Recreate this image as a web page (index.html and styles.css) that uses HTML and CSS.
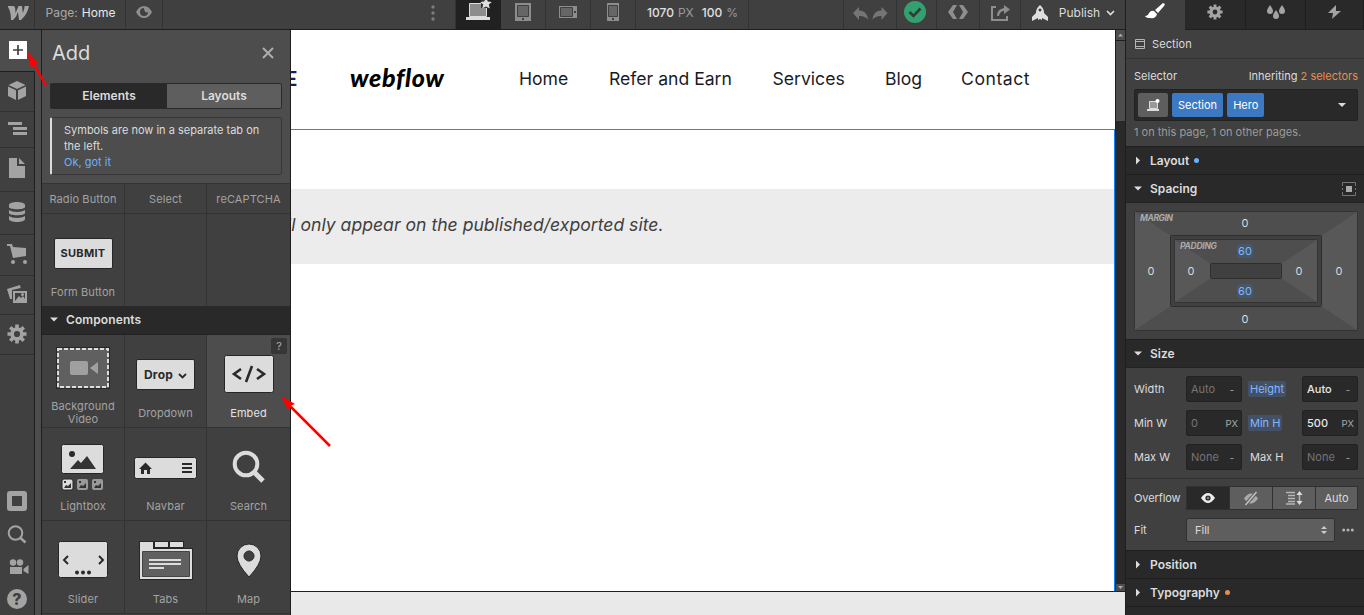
FILE: index.html
```html
<!DOCTYPE html>
<html lang="en">
<head>
<meta charset="utf-8">
<title>Webflow Designer</title>
<link rel="stylesheet" href="styles.css">
</head>
<body>
<div class="app">
  <div class="main">
    <header class="topbar">
      <div class="cell t-logo"><svg width="22" height="16" viewBox="0 0 22 16"><path fill="#a5a5a5" d="M0 1h5q2 0 2.100 2l.5 5L10.500 1H14l.8 7q2-5 1.700-7H21q-1.500 8-8 14H11l-1-8q-1.500 5-5 8H3Q3 7 0 2z"/></svg></div>
      <div class="cell t-page"><span class="dim">Page:</span><span class="home">Home</span></div>
      <div class="cell t-eye"><svg width="16" height="12" viewBox="0 0 16 12"><path fill="#8e8e8e" fill-rule="evenodd" d="M0 6Q3 0 8 0t8 6q-3 6-8 6T0 6zM8 2a4 4 0 1 0 4 4Q10 7 9 5.500T8 2z"/></svg></div>
      <div class="t-space"><svg width="4" height="16"><g fill="#7c7c7c"><circle cx="2" cy="2" r="1.700"/><circle cx="2" cy="8" r="1.700"/><circle cx="2" cy="14" r="1.700"/></g></svg></div>
      <div class="cell t-device on"><svg width="24" height="22" viewBox="0 0 24 22"><path fill="#8d8d8d" stroke="#ddd" d="M3.500 5.500h17v13h-17z"/><path fill="#333" d="M15 2h7v8h-7z"/><path fill="#ddd" d="M0 19h24v3H0zM20 0l1.800 3.500 4 .4-3 2.700 1 4L20 8.500l-3.800 2.100 1-4-3-2.700 4-.4z"/></svg></div>
      <div class="cell t-device"><svg width="16" height="18"><path fill="#8d8d8d" d="M0 0h16v18H0z"/><path fill="#666" stroke="#404040" d="M2.500 2.500h11v11h-11z"/><path fill="#404040" d="M7 15h2v2H7z"/></svg></div>
      <div class="cell t-device"><svg width="18" height="12"><path fill="#8d8d8d" d="M0 0h18v12H0z"/><path fill="#666" stroke="#404040" d="M1.500 1.500h12v9h-12z"/><path fill="#404040" d="M15 5h2v2h-2z"/></svg></div>
      <div class="cell t-device"><svg width="12" height="18"><path fill="#8d8d8d" d="M0 0h12v18H0z"/><path fill="#666" stroke="#404040" d="M1.500 2.500h9v11h-9z"/><path fill="#404040" d="M5 15h2v2H5z"/></svg></div>
      <div class="cell t-size"><b>1070</b><span>PX</span><b class="pct">100</b><span>%</span></div>
      <div class="t-fill"></div>
      <div class="cell t-undo"><svg width="35" height="13"><path fill="#757575" d="M0 6l6-6v3.500q8 0 9 9-3.500-4-9-3.500v4z"/><path fill="#757575" d="M34.500 6l-6-6v3.500q-8 0-9 9 3.500-4 9-3.500v4z"/></svg></div>
      <div class="cell t-check"><svg width="22" height="22"><circle cx="11" cy="11" r="11" fill="#33a06f"/><path d="M5.500 11l4 4 7-7.500" fill="none" stroke="#353a37" stroke-width="2.600"/></svg></div>
      <div class="cell t-code"><svg width="20" height="14"><path fill="#8e8e8e" d="M5 0h4L5 7l4 7H5L0 7zM15 0h-4l4 7-4 7h4l5-7z"/></svg></div>
      <div class="cell t-export"><svg width="20" height="16"><path fill="none" stroke="#8e8e8e" stroke-width="2" d="M5 2H1v13h15v-4"/><path fill="#8e8e8e" d="M13 0l6 4.500-6 4.500V6q-4 0-5 5H6q0-7 7-8z"/></svg></div>
      <div class="cell t-publish"><svg width="16" height="16"><path fill="#dedede" fill-rule="evenodd" d="M8 0q4 3 4 8l4 4v4l-4-2-2-1v2l-2-1-2 1v-2l-2 1-4 2v-4l4-4q0-5 4-8zm0 3.500a1.500 1.500 0 1 0 .01 0z"/></svg><span>Publish</span><svg width="9" height="6"><path d="M1 1l3.500 3.500L8 1" fill="none" stroke="#dedede" stroke-width="1.700"/></svg></div>
    </header>

    <div class="work">
      <nav class="rail">
        <div class="r h41 on"><svg width="18" height="18"><path fill="#fff" d="M0 0h18v18H0z"/><path stroke="#404040" stroke-width="1.700" d="M4 9h10M9 4v10"/></svg></div>
        <div class="r h40"><svg width="18" height="19"><path fill="#a3a3a3" d="M9 0l8.500 4L9 8 .5 4zM0 5.500l8 3.800V19l-8-4zM18 5.500l-8 3.800V19l8-4z"/></svg></div>
        <div class="r h36"><svg width="19" height="13"><path fill="#a3a3a3" d="M0 0h14v3H0zM5 5h14v3H5zM5 10h14v3H5z"/></svg></div>
        <div class="r h44"><svg width="16" height="20"><path fill="#a3a3a3" d="M0 0h8v8h8v12H0zM10 0l6 6h-6z"/></svg></div>
        <div class="r h43"><svg width="16" height="20"><path fill="#a3a3a3" d="M0 3c0-4 16-4 16 0v2c0 3-16 3-16 0zM0 8c3 2.500 13 2.500 16 0v3c0 3-16 3-16 0zM0 14c3 2.500 13 2.500 16 0v3c0 4-16 4-16 0z"/></svg></div>
        <div class="r h41"><svg width="20" height="20"><path fill="#a3a3a3" d="M0 0h5l1 3 13 1v8l-13 2-3-12H0z"/><circle cx="6" cy="18" r="2" fill="#a3a3a3"/><circle cx="18" cy="18" r="2" fill="#a3a3a3"/></svg></div>
        <div class="r h39"><svg width="20" height="18"><path fill="#a3a3a3" fill-rule="evenodd" d="M0 4L13 0l.7 3L5 5v9H3zM6 6h14v12H6zm2 2v8l4-5 2 2 2-2 2 3V8z"/><circle cx="15.500" cy="9.500" r="1.500" fill="#a3a3a3"/></svg></div>
        <div class="r h40"><svg width="20" height="20" viewBox="-10 -10 20 20"><g fill="#a3a3a3"><circle r="4.900" fill="none" stroke="#a3a3a3" stroke-width="3.600"/><path id="teeth" d="M-1.800-9.500h3.600v4h-3.600zM-1.800 5.500h3.600v4h-3.600zM-9.500-1.800v3.600h4v-3.600zM5.500-1.800v3.600h4v-3.600z"/><use href="#teeth" transform="rotate(45)"/></g></svg></div>
        <div class="rail-foot">
          <svg width="20" height="20"><rect x="2.500" y="2.500" width="15" height="15" fill="#404040" stroke="#a3a3a3" stroke-width="5" rx=".5"/></svg>
          <svg width="20" height="20"><circle cx="8.500" cy="8" r="6.800" fill="none" stroke="#a3a3a3" stroke-width="2"/><path stroke="#a3a3a3" stroke-width="2.400" d="M13.500 13l5 4.500"/></svg>
          <svg class="cam" width="20" height="16"><g fill="#a3a3a3"><circle cx="4" cy="3.500" r="3.200"/><circle cx="11" cy="3.500" r="3.200"/><path d="M1 8h12v7H1zM14.500 10l5-4v9l-5-3z"/></g></svg>
          <div class="help">?</div>
        </div>
      </nav>
      <aside class="panel">
        <div class="p-head">
          <div class="p-title"><h1>Add</h1><svg width="12" height="12"><path stroke="#adadad" stroke-width="2" d="M1 1l10 10M11 1L1 11"/></svg></div>
          <div class="tabs"><span class="on">Elements</span><span>Layouts</span></div>
          <div class="note">Symbols are now in a separate tab on the left.<br><a>Ok, got it</a></div>
        </div>
        <div class="grid first"><div>Radio Button</div><div>Select</div><div>reCAPTCHA</div></div>
        <div class="grid second"><div><span class="btn">SUBMIT</span>Form Button</div><div></div><div></div></div>
        <div class="p-section"><i class="tri down"></i>Components</div>
        <div class="grid">
          <div><svg class="bgv" width="54" height="42"><path fill="#262626" d="M0 0h54v42H0z"/><path fill="#606060" d="M1 1h52v40H1z"/><path fill="none" stroke="#ddd" stroke-width="2" stroke-dasharray="4 2" d="M2 2h50v38H2z"/><rect x="14" y="14" width="18" height="14" rx="2" fill="#a0a0a0"/><path fill="#a0a0a0" d="M34 21l8-6v12z"/></svg><p class="two">Background Video</p></div>
          <div><span class="btn drop">Drop <svg width="9" height="6"><path d="M1 1l3.500 3.500L8 1" fill="none" stroke="#292929" stroke-width="1.800"/></svg></span>Dropdown</div>
          <div class="on"><span class="q">?</span><svg width="50" height="38"><rect x=".5" y=".5" width="49" height="37" rx="2" fill="#dcdcdc" stroke="#262626"/><path fill="none" stroke="#292929" stroke-width="2.600" d="M17 14l-7 5 7 5M33 14l7 5-7 5M28 11l-6 16"/></svg>Embed</div>
          <div><svg class="light" width="44" height="48"><rect x=".5" y=".5" width="42" height="29" rx="2" fill="#dcdcdc" stroke="#262626"/><circle cx="11" cy="10" r="3" fill="#292929"/><path fill="#333" d="M9 25l8-9 3 3 6-7 9 13z"/><rect x="1" y="35" width="11" height="11" rx="2" fill="#ddd" stroke="#262626"/><rect x="16" y="35" width="11" height="11" rx="2" fill="#999"/><rect x="31" y="35" width="11" height="11" rx="2" fill="#999"/><g fill="#333"><path id="mini" d="M3 44l2-3 2 1 3-3v5zM3 37h2v2H3z"/><use href="#mini" x="15"/><use href="#mini" x="30"/></g></svg>Lightbox</div>
          <div><svg class="navb" width="64" height="22"><rect x=".5" y=".5" width="62" height="21" rx="2" fill="#dcdcdc" stroke="#262626"/><path fill="#292929" d="M5 12l6.500-6.500L18 12h-2v5h-3v-4h-3v4H7v-5zM48 6h10v2H48zM48 10h10v2H48zM48 14h10v2H48z"/></svg>Navbar</div>
          <div><svg class="mag" width="34" height="34"><circle cx="14" cy="14" r="11.300" fill="none" stroke="#dcdcdc" stroke-width="4"/><path stroke="#dcdcdc" stroke-width="5" d="M22 22l9 9"/></svg>Search</div>
          <div><svg width="50" height="38"><rect x=".5" y=".5" width="49" height="36" rx="2" fill="#dcdcdc" stroke="#262626"/><path fill="none" stroke="#292929" stroke-width="2" d="M10 15l-4 4 4 4M41 15l4 4-4 4"/><g fill="#292929"><circle cx="19" cy="31.500" r="2"/><circle cx="25" cy="31.500" r="2"/><circle cx="31" cy="31.500" r="2"/></g></svg>Slider</div>
          <div><svg class="tabi" width="54" height="39"><path fill="#262626" d="M0 0h45v7h9v32H0z"/><path fill="#dcdcdc" d="M1 1h13v7h39v30H1zM16 1h13v5H16zM31 1h13v5H31z"/><path fill="#606060" stroke="#444" d="M3.500 10.500h47v25h-47z"/><path stroke="#dcdcdc" stroke-width="2" d="M10 19h32M10 23h32M10 27h15"/></svg>Tabs</div>
          <div><svg class="pin" width="26" height="36"><path fill="#dcdcdc" stroke="#262626" fill-rule="evenodd" d="M13 1a12 12 0 0 1 12 12q0 8-12 21Q1 21 1 13A12 12 0 0 1 13 1zm0 7a5 5 0 1 0 .01 0z"/></svg>Map</div>
        </div>
      </aside>
      <section class="canvas">
        <div class="site">
          <div class="site-nav"><b class="brand-e">E</b><b class="logo">webflow</b><span>Home</span><span>Refer and Earn</span><span>Services</span><span>Blog</span><span class="n5">Contact</span></div>
          <div class="hero"><div class="embed"><em>ll only appear on the published/exported site.</em></div></div>
        </div>
        <div class="scroll"><div class="up"><i></i></div><div class="thumb"></div><div class="track"></div><div class="up dn"><i></i></div></div>
        <div class="crumbs"></div>
      </section>
    </div>
  </div>

  <aside class="style">
    <div class="s-tabs">
      <div class="on"><svg width="20" height="16"><path fill="#fff" d="M18 0q3 1 1 3l-6 7-3-3zM9 8l3 3q-1 5-7 4-4 0-5-2 3 0 4-3 2-3 5-2z"/></svg></div>
      <div><svg width="16" height="16" viewBox="-10 -10 20 20"><g fill="#a3a3a3"><circle r="5" fill="none" stroke="#a3a3a3" stroke-width="4"/><use href="#teeth"/><use href="#teeth" transform="rotate(45)"/></g></svg></div>
      <div><svg width="18" height="14"><g fill="#a3a3a3"><path id="dr" d="M3 0q3 4 3 6a3 3 0 0 1-6 0q0-2 3-6z"/><use href="#dr" x="6" y="5"/><use href="#dr" x="12"/></g></svg></div>
      <div><svg width="14" height="14"><path fill="#a3a3a3" d="M8 0L0 8h5l-1 6 9-8H8z"/></svg></div>
    </div>
    <div class="s-el"><svg width="10" height="10"><path fill="none" stroke="#b5b5b5" d="M.5.5h9v9h-9zM0 2.500h10M0 7.500h10"/></svg>Section</div>
    <div class="s-sel">
      <div class="line"><span>Selector</span><span>Inheriting <em>2 selectors</em></span></div>
      <div class="tokens"><span class="state"><svg width="13" height="12"><path fill="#999" stroke="#ddd" d="M2.500 2.500h8v7h-8z"/><path fill="#ddd" d="M0 10h12v2H0z"/><circle cx="10.500" cy="2" r="2" fill="#fff"/></svg></span><span>Section</span><span>Hero</span><i class="tri down"></i></div>
      <p>1 on this page, 1 on other pages.</p>
    </div>
    <div class="s-head"><i class="tri"></i>Layout<i class="dot"></i></div>
    <div class="s-head"><i class="tri down"></i>Spacing<svg class="sp-ic" width="14" height="14"><path fill="none" stroke="#757575" d="M.5 4V.5h13V4M.5 10v3.500h13V10M.5 6v2M13.500 6v2"/><path fill="#aaa" d="M4 4h6v6H4z"/></svg></div>
    <div class="s-box">
      <svg width="224" height="120">
        <rect x=".5" y=".5" width="223" height="119" rx="1" fill="#585858"/>
        <path fill="#4e4e4e" d="M1 1h222l-36 24H37zM1 119h222l-36-24H37z"/>
        <rect x=".5" y=".5" width="223" height="119" rx="1" fill="none" stroke="#333"/>
        <rect x="36.500" y="24.500" width="151" height="71" rx="1" fill="#404040" stroke="#2e2e2e"/>
        <rect x="40.500" y="28.500" width="143" height="63" rx="1" fill="#585858"/>
        <path fill="#4e4e4e" d="M41 29h142l-36 24H77zM41 91h142l-36-24H77z"/>
        <rect x="40.500" y="28.500" width="143" height="63" rx="1" fill="none" stroke="#333"/>
        <rect x="76.500" y="52.500" width="71" height="15" rx="1" fill="#404040" stroke="#2e2e2e"/>
        <rect x="103" y="33" width="16" height="14" rx="2" fill="#46566b"/><rect x="103" y="73" width="16" height="14" rx="2" fill="#46566b"/>
        <g class="cap"><text x="6" y="10" textLength="33">MARGIN</text><text x="46" y="38" textLength="37">PADDING</text></g>
        <g class="num"><text x="111" y="16">0</text><text x="111" y="112">0</text><text x="17" y="64">0</text><text x="205" y="64">0</text><text x="57" y="64">0</text><text x="165" y="64">0</text><text class="bl" x="111" y="44">60</text><text class="bl" x="111" y="84">60</text></g>
      </svg>
    </div>
    <div class="s-head size"><i class="tri down"></i>Size</div>
    <div class="s-size">
      <span>Width</span><div class="in"><span>Auto</span><small class="dash">-</small></div><span><mark>Height</mark></span><div class="in set"><span>Auto</span><small class="dash">-</small></div>
      <span>Min W</span><div class="in"><span>0</span><small>PX</small></div><span><mark>Min H</mark></span><div class="in set"><span>500</span><small>PX</small></div>
      <span>Max W</span><div class="in"><span>None</span><small class="dash">-</small></div><span class="mh">Max H</span><div class="in"><span>None</span><small class="dash">-</small></div>
    </div>
    <div class="s-over">
      <div class="row"><label>Overflow</label><div class="seg">
        <span class="on"><svg width="14" height="10"><path fill="#eee" d="M0 5q7-10 14 0-7 10-14 0z"/><circle cx="7" cy="5" r="2.600" fill="#292929"/><circle cx="7" cy="5" r="1.200" fill="#888"/></svg></span>
        <span><svg width="16" height="13"><path fill="#aaa" fill-rule="evenodd" d="M1 6.500q7-10 14 0-7 10-14 0zM8 4.500a2 2 0 1 0 .01 0z"/><path stroke="#5e5e5e" stroke-width="3.400" d="M2 13L14 0"/><path stroke="#c0c0c0" stroke-width="1.500" d="M2.500 13L13.500 0"/></svg></span>
        <span><svg width="16" height="14"><path stroke="#b5b5b5" stroke-width="1.500" d="M0 1.500h9M2 4.500h7M2 7.500h7M2 10.500h7M0 13h9M13.500 2v10"/><path fill="#ddd" d="M10.500 4l3-4 3 4zM10.500 10l3 4 3-4z"/></svg></span>
        <span>Auto</span></div></div>
      <div class="row fit"><label>Fit</label><div class="select">Fill<svg width="6" height="8"><path fill="#ccc" d="M0 3l3-3 3 3zM0 5l3 3 3-3z"/></svg></div><svg class="more" width="12" height="4"><g fill="#b5b5b5"><circle cx="1.700" cy="2" r="1.500"/><circle cx="6" cy="2" r="1.500"/><circle cx="10.300" cy="2" r="1.500"/></g></svg></div>
    </div>
    <div class="s-head"><i class="tri"></i>Position</div>
    <div class="s-head"><i class="tri"></i>Typography<i class="dot or"></i></div>
    <div class="s-head"></div>
  </aside>
  <svg class="arrows" width="1364" height="615"><g stroke="red" stroke-width="2.500" fill="red"><path d="M46 86L34 64"/><path stroke="none" d="M27 51l12 13-4 0-4 4z"/><path d="M330 446L290 406"/><path stroke="none" d="M281 396l14 8-5 2-2 4z"/></g></svg>
</div>
</body>
</html>
```
FILE: styles.css
```css
* { box-sizing: border-box; }
body { margin: 0; background: #404040; font: 11px Inter, sans-serif; color: #dcdcdc; overflow: hidden; }
svg { display: block; flex: none; overflow: visible; }
h1, p { margin: 0; font-weight: 400; }
em { font-style: normal; }
.app { display: flex; width: 1364px; height: 615px; position: relative; }
.main { width: 1125px; display: flex; flex-direction: column; }
.arrows { position: absolute; left: 0; top: 0; pointer-events: none; }

.topbar { height: 30px; display: flex; border-bottom: 1px solid #1e1e1e; }
.cell { display: flex; align-items: center; justify-content: center; border-right: 1px solid #333; padding-bottom: 4px; }
.t-logo { width: 35px; padding-left: 3px; padding-bottom: 3px; }
.t-page { width: 91px; gap: 4px; font-size: 12px; padding-left: 1px; }
.dim { color: #a8a8a8; }
.home { color: #e8e8e8; }
.t-eye { width: 37px; padding-bottom: 5px; }
.t-space { width: 293px; display: flex; align-items: center; justify-content: flex-end; padding: 0 20px 4px 0; border-right: 1px solid #333; }
.t-device { width: 45px; padding-bottom: 5px; }
.t-device.on { background: #212121; padding-bottom: 11px; border-color: #212121; }
.t-size { width: 113px; gap: 4px; font-size: 12px; color: #999; padding-left: 1px; }
.t-size b { font-weight: 500; color: #e0e0e0; }
.t-size .pct { margin-left: 4px; }
.t-fill { flex: 1; border-right: 1px solid #333; }
.t-undo { width: 53px; padding-bottom: 3px; }
.t-check { width: 40px; padding-bottom: 5px; padding-right: 4px; }
.t-code { width: 43px; padding-bottom: 5px; }
.t-export { width: 41px; padding-left: 2px; }
.t-publish { width: 104px; gap: 6px; border-right: 0; font-size: 12px; padding-left: 1px; }
.t-publish span { margin-left: 5px; }

.work { flex: 1; min-height: 0; display: flex; }
.rail { width: 35px; display: flex; flex-direction: column; border-right: 1px solid #1e1e1e; }
.r { display: flex; align-items: center; justify-content: center; border-bottom: 1px solid #303030; padding-bottom: 2px; }
.r.on { background: #4d4d4d; width: 35px; border-color: #1e1e1e; }
.h41 { height: 41px; } .h40 { height: 40px; } .h36 { height: 36px; } .h39 { height: 39px; }
.h44 { height: 44px; padding-bottom: 4px; } .h43 { height: 43px; }
.r.h41.on { height: 42px; }
.rail-foot { margin-top: auto; display: flex; flex-direction: column; align-items: center; gap: 14px; padding-bottom: 6px; }
.rail-foot .cam { margin-left: 3px; }
.help { width: 20px; height: 20px; border-radius: 10px; background: #a3a3a3; color: #404040; font: 800 16px/20px Inter, sans-serif; text-align: center; }
.panel { width: 256px; border-left: 6px solid #4d4d4d; border-right: 1px solid #1e1e1e; background: #404040; box-shadow: inset 1px 0 #1e1e1e; padding-left: 1px; overflow: hidden; }
.p-head { height: 154px; background: #4d4d4d; padding: 10px 8px 0; border-bottom: 1px solid #333; }
.p-title { height: 43px; display: flex; justify-content: space-between; padding: 0 8px 0 2px; }
.p-title svg { margin-top: 7px; }
h1 { font-size: 20px; line-height: 26px; }
.tabs { display: grid; grid-template-columns: 116px 1fr; height: 26px; border: 1px solid #2a2a2a; border-radius: 2px; font: 600 12px/24px Inter, sans-serif; text-align: center; background: #5e5e5e; }
.tabs .on { background: #292929; }
.note { height: 58px; margin-top: 8px; border: 1px solid #363636; border-left: 2px solid #dcdcdc; padding: 4px 12px 0 12px; line-height: 16px; border-radius: 2px; }
.note a { color: #6cb1fc; }
.grid { display: grid; grid-template-columns: 83px 82px 83px; grid-auto-rows: 93px; color: #a3a3a3; line-height: 14px; }
.grid > div { display: flex; flex-direction: column; align-items: center; justify-content: flex-end; padding-bottom: 7px; border-right: 1px solid #333; border-bottom: 1px solid #333; position: relative; white-space: nowrap; letter-spacing: .1px; }
.grid > div:nth-child(3n) { border-right: 0; }
.grid svg { margin-bottom: 13px; }
.grid .on { background: #4d4d4d; color: #e2e2e2; }
.grid.first { grid-auto-rows: 30px; }
.grid.second { grid-auto-rows: 92px; }
.grid.second > div { border-bottom: 0; }
.btn { width: 59px; height: 31px; background: #dcdcdc; color: #292929; border: 1px solid #262626; border-radius: 2px; font: 700 11px/29px Inter, sans-serif; letter-spacing: .3px; text-align: center; margin-bottom: 16px; }
.grid .drop { display: flex; align-items: center; justify-content: center; gap: 5px; font-size: 12px; letter-spacing: .2px; }
.grid .drop svg { margin: 2px 0 0; }
.two { width: 70px; white-space: normal; text-align: center; line-height: 13px; margin-bottom: -6px; }
.grid .bgv { margin-bottom: 11px; }
.grid .light { margin-bottom: 7px; }
.grid .navb { margin-bottom: 20px; }
.grid .mag { margin-bottom: 15px; }
.grid .tabi { margin-bottom: 12px; }
.grid .pin { margin-bottom: 13px; }
.q { position: absolute; right: 3px; top: 3px; width: 16px; height: 16px; background: #363636; border-radius: 2px; text-align: center; line-height: 16px; color: #aaa; }
.p-section { height: 29px; background: #292929; border-bottom: 1px solid #222; display: flex; align-items: center; gap: 8px; padding: 0 8px 1px; font-weight: 600; font-size: 12px; letter-spacing: .1px; }
.tri { width: 8px; height: 8px; background: #dcdcdc; clip-path: polygon(2px 0, 6px 4px, 2px 8px); flex: none; }
.tri.down { clip-path: polygon(0 2px, 8px 2px, 4px 6px); }

.canvas { flex: 1; display: grid; grid-template-columns: 824px 10px; grid-template-rows: 561px 24px; color: #1a1b1f; overflow: hidden; }
.site { background: #fff; overflow: hidden; }
.site-nav { height: 99px; padding-bottom: 2px; display: grid; grid-template-columns: 59px 169px 90px 163.500px 112.500px 76px 1fr; align-items: center; font-size: 17.600px; white-space: nowrap; }
.site-nav .n5 { letter-spacing: .55px; }
.brand-e { color: #1a1b5f; font: 700 21px Roboto, sans-serif; margin-left: -6px; }
.site-nav .logo { color: #000; font: italic 900 25px/30px Lato, sans-serif; letter-spacing: .65px; margin-top: -3px; }
.hero { height: 462px; border-top: 1px solid #2b87da; border-right: 1px solid #0a84ff; padding-top: 59px; }
.embed { height: 75px; background: #ececec; color: #3f3f3f; font: 17.600px/71px Inter, sans-serif; white-space: nowrap; }
.embed em { font-style: italic; margin-left: -4px; }
.scroll { background: #4d4d4d; border-left: 1px solid #1e1e1e; display: flex; flex-direction: column; }
.up { height: 11px; border-bottom: 1px solid #1e1e1e; display: flex; align-items: center; justify-content: center; }
.up i { width: 5px; height: 3px; background: #aaa; clip-path: polygon(50% 0, 100% 100%, 0 100%); }
.up.dn { height: 7px; border: 0; }
.up.dn i { transform: rotate(180deg); }
.thumb { height: 80px; }
.track { flex: 1; background: #292929; }
.crumbs { grid-column: 1 / 3; background: #e9e9e9; border-top: 1px solid #1e1e1e; }

.style { width: 239px; border-left: 1px solid #1e1e1e; background: #404040; overflow: hidden; }
.s-tabs { height: 30px; display: grid; grid-template-columns: 59px 61px 60px 58px; }
.s-tabs div { background: #292929; border-right: 1px solid #1e1e1e; border-bottom: 1px solid #1e1e1e; display: flex; align-items: center; justify-content: center; padding-bottom: 5px; }
.s-tabs .on { background: #404040; border: 0; padding: 0 2px 8px 0; }
.s-el { height: 29px; border-bottom: 1px solid #333; display: flex; align-items: center; gap: 7px; padding-left: 9px; letter-spacing: .1px; }
.s-sel { height: 87px; padding: 8px 6px 0 8px; }
.line { display: flex; justify-content: space-between; line-height: 18px; }
.line em { color: #e58e50; }
.tokens { height: 32px; margin-top: 4px; background: #292929; border: 1px solid #222; border-radius: 2px; display: flex; align-items: center; gap: 4px; padding: 0 11px 0 3px; font-size: 11px; }
.tokens span { background: #3b79c3; height: 24px; line-height: 24px; padding: 0 6px; border-radius: 2px; color: #fff; }
.tokens .state { width: 30px; background: #5e5e5e; padding: 6px 9px; }
.tokens .tri { margin-left: auto; }
.s-sel p { color: #9b9b9b; margin-top: 4px; line-height: 14px; }
.s-head { height: 28px; background: #292929; border-top: 1px solid #1e1e1e; display: flex; align-items: center; padding: 0 8px; font-weight: 600; font-size: 12px; }
.s-head .tri { margin-right: 8px; }
.dot { width: 5px; height: 5px; border-radius: 3px; background: #6cb1fc; margin-left: 5px; }
.dot.or { background: #e58e50; }
.sp-ic { margin-left: auto; }
.s-box { height: 137px; padding: 8px; border-top: 1px solid #222; }
.cap { font: italic 700 8.500px Inter, sans-serif; fill: #aaa; }
.num { font-size: 11px; fill: #dcdcdc; text-anchor: middle; }
.num .bl { fill: #82b8ff; }
.s-head.size { height: 29px; border-bottom: 1px solid #222; }
.s-size { height: 110px; padding: 8px 6px 0 8px; display: grid; grid-template-columns: 52px 56px 60px 56px; grid-auto-rows: 26px; row-gap: 8px; align-items: center; }
.in { height: 26px; background: #292929; border: 1px solid #222; border-radius: 2px; display: flex; justify-content: space-between; align-items: center; padding: 0 3px 0 4px; color: #757575; }
.in small { font-size: 9.500px; color: #aaa; }
.in .dash { padding-right: 4px; }
.set { color: #e8e8e8; font-weight: 500; }
.set small { font-weight: 400; }
mark { background: #435166; color: #82b8ff; border-radius: 2px; padding: 1px 2px; margin-left: 6px; }
.mh { padding-left: 8px; }
.s-over { height: 72px; border-top: 1px solid #303030; padding: 7px 6px 0 8px; }
.row { display: flex; align-items: center; height: 24px; }
.row label { width: 52px; letter-spacing: -.1px; }
.seg { width: 172px; height: 24px; display: grid; grid-template-columns: 43px 43px 43px 1fr; border: 1px solid #303030; background: #5e5e5e; }
.seg span { display: flex; align-items: center; justify-content: center; border-right: 1px solid #303030; }
.seg span:last-child { border: 0; }
.seg .on { background: #292929; }
.fit { margin-top: 8px; }
.select { width: 149px; height: 24px; border: 1px solid #303030; border-radius: 2px; background: #5e5e5e; display: flex; align-items: center; justify-content: space-between; padding: 0 7px 0 8px; }
.more { margin-left: 7px; }
```
